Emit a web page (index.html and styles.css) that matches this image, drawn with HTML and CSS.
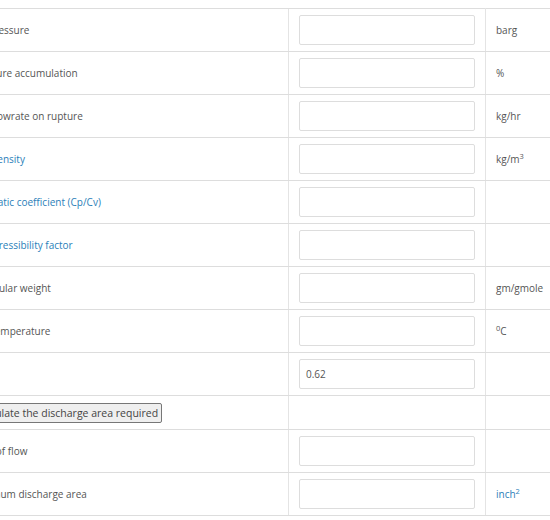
FILE: index.html
```html
<!DOCTYPE html>
<html>
<head>
<meta charset="utf-8">
<link rel="stylesheet" href="styles.css">
</head>
<body>
<table class="calc">
  <tbody>
    <tr><td class="lbl">Set pressure</td><td class="val"><input class="field" type="text"></td><td class="unit">barg</td></tr>
    <tr><td class="lbl">Pressure accumulation</td><td class="val"><input class="field" type="text"></td><td class="unit">%</td></tr>
    <tr><td class="lbl">Gas flowrate on rupture</td><td class="val"><input class="field" type="text"></td><td class="unit">kg/hr</td></tr>
    <tr><td class="lbl"><a class="link" href="#">Gas density</a></td><td class="val"><input class="field" type="text"></td><td class="unit">kg/m<sup>3</sup></td></tr>
    <tr><td class="lbl"><a class="link" href="#">Adiabatic coefficient (Cp/Cv)</a></td><td class="val"><input class="field" type="text"></td><td class="unit"></td></tr>
    <tr><td class="lbl"><a class="link" href="#">Compressibility factor</a></td><td class="val"><input class="field" type="text"></td><td class="unit"></td></tr>
    <tr><td class="lbl">Molecular weight</td><td class="val"><input class="field" type="text"></td><td class="unit">gm/gmole</td></tr>
    <tr><td class="lbl">Gas temperature</td><td class="val"><input class="field" type="text"></td><td class="unit"><sup>0</sup>C</td></tr>
    <tr><td class="lbl">Kd</td><td class="val"><input class="field" type="text" value="0.62"></td><td class="unit"></td></tr>
    <tr class="btnrow"><td class="lbl"><button class="btn" type="button">Calculate the discharge area required</button></td><td class="val"></td><td class="unit"></td></tr>
    <tr><td class="lbl">Type of flow</td><td class="val"><input class="field" type="text"></td><td class="unit"></td></tr>
    <tr><td class="lbl">Minimum discharge area</td><td class="val"><input class="field" type="text"></td><td class="unit"><a class="link" href="#">inch<sup>2</sup></a></td></tr>
  </tbody>
</table>
</body>
</html>
```
FILE: styles.css
```css
html, body {
  overflow: hidden;
}
body {
  margin: 8px 0 0 0;
  background: #fff;
  font-family: "Open Sans", "DejaVu Sans", sans-serif;
  font-size: 10px;
  color: #555;
}
.calc {
  border-collapse: collapse;
  margin-left: -39px;
  width: 660px;
  table-layout: fixed;
}
.calc td {
  border-top: 1px solid #ddd;
  border-bottom: 1px solid #ddd;
  padding: 6px 10px;
  vertical-align: middle;
  height: 30px;
}
.calc td.lbl {
  width: 307px;
}
.calc td.val {
  width: 176px;
  border-left: 1px solid #e4e4e4;
  border-right: 1px solid #e4e4e4;
}
.calc .btnrow td {
  height: 21px;
}
.field {
  display: block;
  box-sizing: border-box;
  width: 100%;
  height: 30px;
  margin: 0;
  padding: 0 6px;
  border: 1px solid #ddd;
  border-radius: 2px;
  font-family: "Open Sans", "DejaVu Sans", sans-serif;
  font-size: 10px;
  color: #555;
  background: #fff;
}
.link {
  color: #2b80b9;
  text-decoration: none;
}
.unit sup {
  font-size: 7.5px;
  line-height: 0;
}
.btn {
  font-family: "Open Sans", "DejaVu Sans", sans-serif;
  font-size: 10.5px;
  color: #444;
  background: #efefef;
  border: 1px solid #777;
  border-radius: 2px;
  padding: 2px 3px;
  margin: 0;
}
```
